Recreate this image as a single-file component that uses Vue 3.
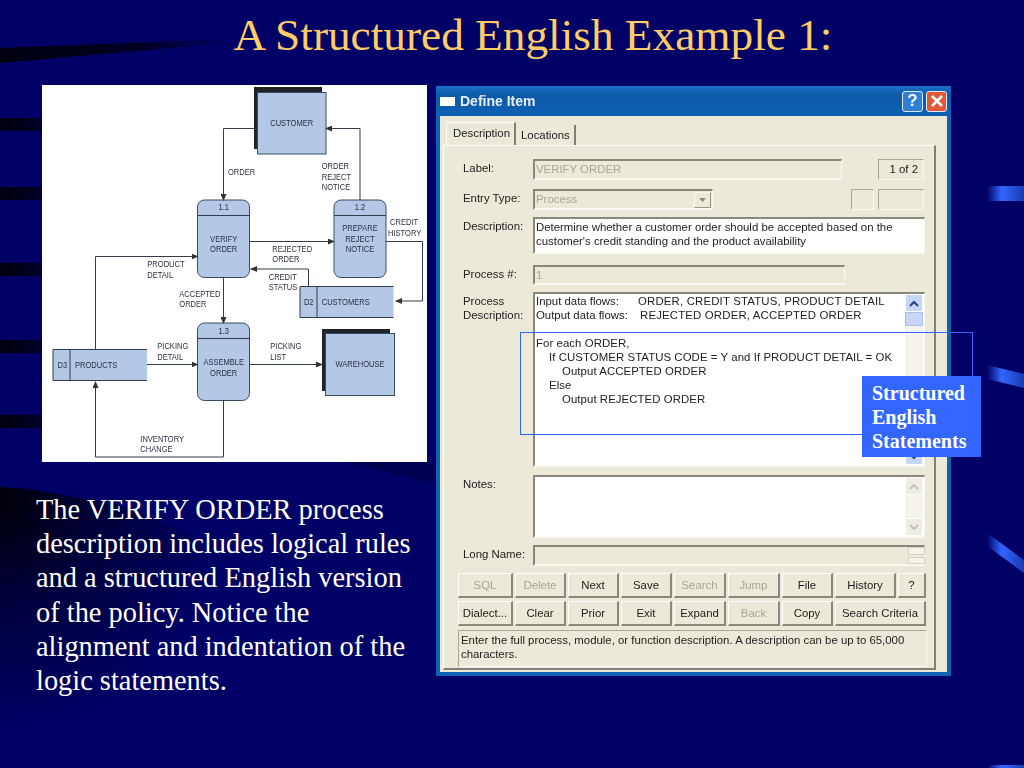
<template>
  <div class="slide">
    <svg class="backdrop" width="1024" height="768" viewBox="0 0 1024 768">
      <defs>
        <linearGradient id="fadeDark" x1="0" y1="0" x2="1" y2="0">
          <stop offset="0" stop-color="#000010" />
          <stop offset="0.6" stop-color="#000022" />
          <stop offset="1" stop-color="#000066" />
        </linearGradient>
        <radialGradient id="wedge" gradientUnits="userSpaceOnUse" cx="0" cy="500" r="230">
          <stop offset="0" stop-color="#000008" />
          <stop offset="0.45" stop-color="#00003c" />
          <stop offset="1" stop-color="#000066" />
        </radialGradient>
        <linearGradient id="fadeBlue" x1="0" y1="0" x2="1" y2="0">
          <stop offset="0" stop-color="#000066" />
          <stop offset="0.4" stop-color="#3366ff" />
          <stop offset="1" stop-color="#1a3ab0" />
        </linearGradient>
      </defs>
      <polygon points="0,48 230,39 230,43 0,63" fill="url(#fadeDark)" />
      <rect v-for="y in darkBars" :key="y" x="0" :y="y" width="60" height="13" fill="url(#fadeDark)" />
      <polygon points="0,487 30,489 120,505 250,560 230,700 0,730" fill="url(#wedge)" />
      <polygon points="345,462 436,462 436,484" fill="#000050" />
      <rect x="987" y="186" width="37" height="15" fill="url(#fadeBlue)" />
      <polygon points="987,365 1024,374 1024,388 987,379" fill="url(#fadeBlue)" />
      <polygon points="987,533 1024,560 1024,573 987,546" fill="url(#fadeBlue)" />
      <rect x="987" y="765" width="37" height="3" fill="url(#fadeBlue)" />
    </svg>

    <h1 class="title">A Structured English Example 1:</h1>

    <svg class="diagram" width="385" height="377" viewBox="42 85 385 377">
      <defs>
        <marker id="head" markerWidth="7" markerHeight="6" refX="6" refY="3" orient="auto" markerUnits="userSpaceOnUse">
          <path d="M0 0L7 3L0 6z" fill="#333" />
        </marker>
      </defs>
      <rect x="42" y="85" width="385" height="377" fill="#fff" />

      <rect x="254" y="87" width="68" height="62" fill="#22222a" />
      <rect x="257.5" y="92.5" width="68.5" height="61.5" class="box" />
      <rect x="322" y="329" width="68" height="62" fill="#22222a" />
      <rect x="325.5" y="333.5" width="69" height="62" class="box" />

      <g v-for="p in processes" :key="p.id">
        <rect :x="p.x" :y="p.y" width="52" height="77.5" rx="7" class="box" />
        <line :x1="p.x" :y1="p.y + 15.5" :x2="p.x + 52" :y2="p.y + 15.5" class="wire" />
      </g>

      <g v-for="s in stores" :key="s.id">
        <rect :x="s.x" :y="s.y" :width="s.w" height="31" fill="#b3c8e6" />
        <path :d="`M${s.x + s.w} ${s.y}H${s.x}V${s.y + 31}H${s.x + s.w}M${s.x + 17} ${s.y}V${s.y + 31}`" class="wire" />
      </g>

      <path v-for="(d, i) in flows" :key="i" :d="d" class="wire" marker-end="url(#head)" />

      <text v-for="t in labels" :key="t.text + t.x + t.y" :x="t.x" :y="t.y" :text-anchor="t.mid ? 'middle' : 'start'" class="dfd-text" :class="{ mid: t.mid }">{{ t.text }}</text>
    </svg>

    <p class="body-text">The VERIFY ORDER process description includes logical rules and a structured English version of the policy. Notice the alignment and indentation of the logic statements.</p>

    <div class="dialog">
      <div class="titlebar">
        <span class="title-icon"></span>
        <span class="title-text">Define Item</span>
        <span class="cap-btn help">?</span>
        <span class="cap-btn close">
          <svg width="14" height="14" viewBox="0 0 14 14"><path d="M2 2L12 12M12 2L2 12" stroke="#fff" stroke-width="2.6" /></svg>
        </span>
      </div>
      <div class="client">
        <div class="tabs">
          <span class="tab active">Description</span>
          <span class="tab">Locations</span>
        </div>
        <div class="panel">
          <div class="row r-label">
            <span class="lbl">Label:</span>
            <div class="field off w309">VERIFY ORDER</div>
            <div class="flat count">1 of 2</div>
          </div>
          <div class="row r-entry">
            <span class="lbl">Entry Type:</span>
            <div class="field off w180 combo">
              Process
              <span class="combo-btn"><svg width="9" height="6" viewBox="0 0 9 6"><path d="M1 1L4.5 5L8 1z" fill="#8a8a80" /></svg></span>
            </div>
            <div class="flat small"></div>
            <div class="flat count blank"></div>
          </div>
          <div class="row r-desc">
            <span class="lbl">Description:</span>
            <div class="field on grow">Determine whether a customer order should be accepted based on the<br />customer's credit standing and the product availability</div>
          </div>
          <div class="row r-num">
            <span class="lbl">Process #:</span>
            <div class="field off w312">1</div>
          </div>
          <div class="row r-proc">
            <span class="lbl">Process<br />Description:</span>
            <div class="field on grow scroller">
              <div class="proc-text">
                <div><span class="col-a">Input data flows:</span><span class="wide">ORDER, CREDIT STATUS, PRODUCT DETAIL</span></div>
                <div><span class="col-b">Output data flows:</span><span class="wide">REJECTED ORDER, ACCEPTED ORDER</span></div>
                <div class="gap-line"></div>
                <div v-for="line in logic" :key="line.text" :class="'indent' + line.level" class="logic">{{ line.text }}</div>
              </div>
              <div class="scrollbar">
                <span class="sb-btn">
                  <svg width="10" height="7" viewBox="0 0 10 7"><path d="M1 6L5 2L9 6" fill="none" stroke="#27457f" stroke-width="2" /></svg>
                </span>
                <span class="sb-thumb"></span>
                <span class="sb-track"></span>
                <span class="sb-btn">
                  <svg width="10" height="7" viewBox="0 0 10 7"><path d="M1 1L5 5L9 1" fill="none" stroke="#27457f" stroke-width="2" /></svg>
                </span>
              </div>
            </div>
          </div>
          <div class="row r-notes">
            <span class="lbl">Notes:</span>
            <div class="field on grow scroller">
              <div class="proc-text"></div>
              <div class="scrollbar">
                <span class="sb-btn dim">
                  <svg width="10" height="7" viewBox="0 0 10 7"><path d="M1 6L5 2L9 6" fill="none" stroke="#c4c4ba" stroke-width="2" /></svg>
                </span>
                <span class="sb-track"></span>
                <span class="sb-btn dim">
                  <svg width="10" height="7" viewBox="0 0 10 7"><path d="M1 1L5 5L9 1" fill="none" stroke="#c4c4ba" stroke-width="2" /></svg>
                </span>
              </div>
            </div>
          </div>
          <div class="row r-long">
            <span class="lbl">Long Name:</span>
            <div class="field off grow spin-field">
              <div class="spin"><span></span><span></span></div>
            </div>
          </div>
          <div class="buttons">
            <button v-for="b in buttons" :key="b.text" type="button" :class="[b.cls, { off: b.off }]">{{ b.text }}</button>
          </div>
          <div class="hint">Enter the full process, module, or function description. A description can be up to 65,000 characters.</div>
        </div>
      </div>
    </div>

    <div class="outline"></div>
    <div class="callout">Structured<br />English<br />Statements</div>
  </div>
</template>

<script setup>
const darkBars = [118, 187, 263, 340, 415]

const processes = [
  { id: 1, x: 197.5, y: 200 },
  { id: 2, x: 334, y: 200 },
  { id: 3, x: 197.5, y: 323 },
]

const stores = [
  { id: 'D2', x: 300, y: 286.5, w: 93.5 },
  { id: 'D3', x: 53, y: 349.5, w: 94 },
]

const flows = [
  'M254 128.5H223.5V200',
  'M360 200V128.5H326',
  'M249.5 241.5H334',
  'M385.5 241.5H422.5V301H396',
  'M308.5 286.5V269H251',
  'M95.5 349.5V256.5H197.5',
  'M223.5 277.5V323',
  'M147 364.5H197.5',
  'M249.5 364.5H322',
  'M223.5 400.5V457H95.5V382',
]

const labels = [
  { text: 'CUSTOMER', x: 291.7, y: 126, mid: true },
  { text: 'WAREHOUSE', x: 360, y: 367, mid: true },
  { text: '1.1', x: 223.7, y: 210.5, mid: true },
  { text: 'VERIFY', x: 223.7, y: 242, mid: true },
  { text: 'ORDER', x: 223.7, y: 252.5, mid: true },
  { text: '1.2', x: 360, y: 210.5, mid: true },
  { text: 'PREPARE', x: 360, y: 231.5, mid: true },
  { text: 'REJECT', x: 360, y: 242, mid: true },
  { text: 'NOTICE', x: 360, y: 252.5, mid: true },
  { text: '1.3', x: 223.7, y: 334, mid: true },
  { text: 'ASSEMBLE', x: 223.7, y: 365.5, mid: true },
  { text: 'ORDER', x: 223.7, y: 376, mid: true },
  { text: 'D2', x: 308.7, y: 305.5, mid: true },
  { text: 'CUSTOMERS', x: 321.7, y: 305.5 },
  { text: 'D3', x: 62.3, y: 368, mid: true },
  { text: 'PRODUCTS', x: 75, y: 368 },
  { text: 'ORDER', x: 228, y: 175 },
  { text: 'ORDER', x: 321.7, y: 169 },
  { text: 'REJECT', x: 321.7, y: 180 },
  { text: 'NOTICE', x: 321.7, y: 190.5 },
  { text: 'CREDIT', x: 390, y: 225 },
  { text: 'HISTORY', x: 388, y: 236 },
  { text: 'REJECTED', x: 272.3, y: 252 },
  { text: 'ORDER', x: 272.3, y: 262.5 },
  { text: 'CREDIT', x: 268.7, y: 280.5 },
  { text: 'STATUS', x: 268.7, y: 290.5 },
  { text: 'PRODUCT', x: 147.3, y: 267 },
  { text: 'DETAIL', x: 147.3, y: 278 },
  { text: 'ACCEPTED', x: 179.3, y: 297 },
  { text: 'ORDER', x: 179.3, y: 307.5 },
  { text: 'PICKING', x: 157.3, y: 349.5 },
  { text: 'DETAIL', x: 157.3, y: 360 },
  { text: 'PICKING', x: 270.3, y: 349.5 },
  { text: 'LIST', x: 270.3, y: 360 },
  { text: 'INVENTORY', x: 140.3, y: 442 },
  { text: 'CHANGE', x: 140.3, y: 452.5 },
]

const logic = [
  { text: 'For each ORDER,', level: 0 },
  { text: 'If CUSTOMER STATUS CODE = Y and If PRODUCT DETAIL = OK', level: 1 },
  { text: 'Output ACCEPTED ORDER', level: 2 },
  { text: 'Else', level: 1 },
  { text: 'Output REJECTED ORDER', level: 2 },
]

const buttons = [
  { text: 'SQL', off: true },
  { text: 'Delete', off: true },
  { text: 'Next' },
  { text: 'Save' },
  { text: 'Search', off: true },
  { text: 'Jump', off: true },
  { text: 'File' },
  { text: 'History' },
  { text: '?' },
  { text: 'Dialect...' },
  { text: 'Clear' },
  { text: 'Prior' },
  { text: 'Exit' },
  { text: 'Expand' },
  { text: 'Back', off: true },
  { text: 'Copy' },
  { text: 'Search Criteria', cls: 'span2' },
]
</script>

<style>
html,
body {
  margin: 0;
  background: #000066;
}
</style>

<style scoped>
.slide {
  position: relative;
  width: 1024px;
  height: 768px;
  overflow: hidden;
  background: #000066;
  font-family: "Liberation Serif", serif;
}

.backdrop {
  position: absolute;
  left: 0;
  top: 0;
}

.title {
  position: absolute;
  left: 0;
  top: 9px;
  width: 1066px;
  margin: 0;
  text-align: center;
  font-size: 45.3px;
  line-height: 52px;
  font-weight: normal;
  color: #ffcc66;
}

.diagram {
  position: absolute;
  left: 42px;
  top: 85px;
  filter: blur(0.35px);
}

.box {
  fill: #b3c8e6;
  stroke: #3a4a60;
  stroke-width: 1;
}

.wire {
  fill: none;
  stroke: #333c4a;
  stroke-width: 1;
}

.dfd-text {
  font-family: "Liberation Sans", sans-serif;
  font-size: 9.2px;
  fill: #2a3040;
  transform-box: fill-box;
  transform-origin: 0 50%;
  transform: scaleX(0.82);
}

.dfd-text.mid {
  transform-origin: 50% 50%;
}

.body-text {
  position: absolute;
  left: 36px;
  top: 493px;
  width: 385px;
  margin: 0;
  font-size: 28.4px;
  line-height: 34.2px;
  color: #fff;
}

.dialog {
  position: absolute;
  left: 436px;
  top: 86px;
  width: 515px;
  height: 590px;
  box-sizing: border-box;
  display: flex;
  flex-direction: column;
  background: #0f62b4;
  padding: 0 4px 4px;
  font-family: "Liberation Sans", sans-serif;
  font-size: 11.4px;
  color: #222;
  filter: blur(0.3px);
}

.titlebar {
  height: 30px;
  flex: none;
  display: flex;
  align-items: center;
  margin: 0 -4px;
  padding: 0 4px;
  background: linear-gradient(#1a70c8, #0c5aa8 30%, #0f60b4);
}

.title-icon {
  width: 15px;
  height: 9px;
  background: #fff;
  margin-right: 5px;
}

.title-text {
  flex: 1;
  color: #e8eef8;
  font-weight: bold;
  font-size: 14px;
}

.cap-btn {
  width: 21px;
  height: 21px;
  box-sizing: border-box;
  border: 1px solid #dfe8f4;
  border-radius: 3px;
  display: flex;
  align-items: center;
  justify-content: center;
  color: #fff;
  font-size: 17px;
  font-weight: bold;
  margin-left: 3px;
}

.help {
  background: #2f7ed8;
}

.close {
  background: #e0583a;
}

.client {
  flex: 1;
  background: #ece9d8;
  padding: 6px 11px 0 3px;
  display: flex;
  flex-direction: column;
}

.tabs {
  display: flex;
  height: 23px;
  padding-left: 3px;
  align-items: flex-end;
}

.tab {
  height: 20px;
  line-height: 20px;
  padding: 0 4px 0 5px;
  border-right: 2px solid #808078;
}

.tab.active {
  height: 23px;
  line-height: 21px;
  padding: 0 6px;
  border-left: 1px solid #fff;
  border-top: 1px solid #fff;
  box-sizing: border-box;
  width: 70px;
}

.panel {
  flex: 1;
  box-sizing: border-box;
  border-top: 1px solid #fff;
  border-left: 1px solid #fff;
  border-right: 2px solid #808078;
  border-bottom: 2px solid #808078;
  margin-bottom: 2px;
  padding: 13px 9px 0 14px;
  display: flex;
  flex-direction: column;
}

.row {
  display: flex;
  padding-left: 5px;
  flex: none;
}

.lbl {
  width: 70px;
  flex: none;
  line-height: 14px;
  padding-top: 2px;
}

.r-label {
  height: 21px;
}

.r-entry {
  height: 21px;
  margin-top: 9px;
}

.r-desc {
  height: 37px;
  margin-top: 7px;
}

.r-num {
  height: 20px;
  margin-top: 11px;
}

.r-proc {
  height: 175px;
  margin-top: 7px;
}

.r-notes {
  height: 63px;
  margin-top: 8px;
}

.r-long {
  height: 21px;
  margin-top: 7px;
}

.field {
  box-sizing: border-box;
  border-top: 2px solid #8a887a;
  border-left: 2px solid #8a887a;
  border-right: 1px solid #f8f7f0;
  border-bottom: 2px solid #f8f7f0;
  padding: 1px;
  line-height: 14px;
  white-space: nowrap;
}

.field.off {
  color: #a8a69a;
}

.field.on {
  background: #fff;
}

.w309 {
  width: 309px;
}

.w312 {
  width: 312px;
}

.w180 {
  width: 180px;
  display: flex;
  justify-content: space-between;
}

.grow {
  flex: 1;
  min-width: 0;
}

.combo-btn {
  width: 17px;
  height: 16px;
  box-sizing: border-box;
  border: 1px solid #f8f7f0;
  border-right-color: #9a988a;
  border-bottom-color: #9a988a;
  display: flex;
  align-items: center;
  justify-content: center;
}

.flat {
  box-sizing: border-box;
  border: 1px solid #a8a698;
  border-right-color: #f8f7f0;
  border-bottom-color: #f8f7f0;
}

.count {
  width: 46px;
  height: 21px;
  margin-left: 36px;
  text-align: right;
  line-height: 18px;
  padding-right: 5px;
}

.small {
  width: 23px;
  height: 21px;
  margin-left: 138px;
}

.blank {
  margin-left: 4px;
}

.scroller {
  display: flex;
  padding: 0;
}

.proc-text {
  flex: 1;
  min-width: 0;
  padding: 0 1px;
}

.wide {
  letter-spacing: 0.17px;
}

.logic {
  letter-spacing: 0.07px;
}

.col-a {
  display: inline-block;
  width: 102px;
}

.col-b {
  display: inline-block;
  width: 104px;
}

.gap-line {
  height: 14px;
}

.indent1 {
  padding-left: 13px;
}

.indent2 {
  padding-left: 26px;
}

.scrollbar {
  width: 18px;
  margin-right: 1px;
  display: flex;
  flex-direction: column;
  background: #f4f3ec;
}

.sb-btn {
  height: 18px;
  flex: none;
  box-sizing: border-box;
  border: 1px solid #fff;
  background: #c6d6f6;
  display: flex;
  align-items: center;
  justify-content: center;
}

.sb-btn.dim {
  background: #eeede4;
}

.sb-thumb {
  height: 14px;
  flex: none;
  background: #c6d6f6;
  border: 1px solid #aebfe6;
  box-sizing: border-box;
}

.sb-track {
  flex: 1;
}

.spin-field {
  display: flex;
  justify-content: flex-end;
  padding: 0;
}

.spin {
  width: 17px;
  display: flex;
  flex-direction: column;
  gap: 2px;
  margin-right: -1px;
}

.spin span {
  flex: 1;
  background: #f4f3ec;
  border: 1px solid #d4d2c4;
}

.buttons {
  display: grid;
  grid-template-columns: 55px 51px 51px 51px 52px 52px 51px 61px 28px;
  grid-auto-rows: 25px;
  gap: 3px 2px;
  margin-top: 7px;
}

button {
  box-sizing: border-box;
  margin: 0;
  padding: 0;
  background: #ece9d8;
  border: 1px solid #fff;
  border-right: 2px solid #8a887a;
  border-bottom: 2px solid #8a887a;
  font-family: inherit;
  font-size: 11.4px;
  color: #222;
  white-space: nowrap;
}

button.off {
  color: #a8a69a;
}

.span2 {
  grid-column: span 2;
}

.hint {
  box-sizing: border-box;
  height: 37px;
  width: 469px;
  margin-top: 4px;
  padding: 2px 2px;
  line-height: 14px;
  border: 1px solid #a8a698;
  border-right-color: #f8f7f0;
  border-bottom-color: #f8f7f0;
}

.outline {
  position: absolute;
  left: 520px;
  top: 332px;
  width: 453px;
  height: 103px;
  box-sizing: border-box;
  border: 1px solid #3366ff;
}

.callout {
  position: absolute;
  left: 862px;
  top: 376px;
  width: 119px;
  height: 81px;
  box-sizing: border-box;
  padding: 5px 0 0 10px;
  background: #3366ff;
  color: #fff;
  font-weight: bold;
  font-size: 20px;
  line-height: 24px;
}
</style>
